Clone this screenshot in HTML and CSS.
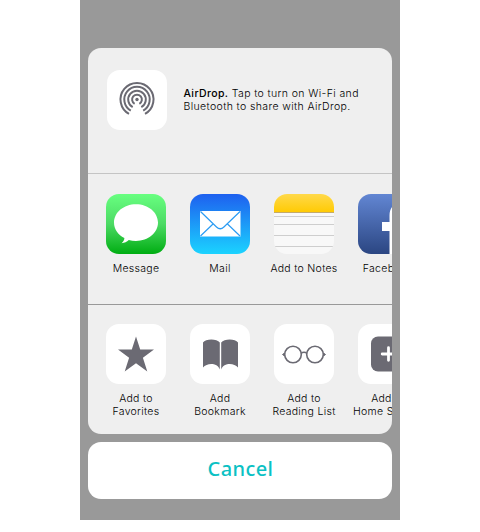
FILE: index.html
```html
<!DOCTYPE html>
<html lang="en">
<head>
<meta charset="utf-8">
<title>Share</title>
<link rel="stylesheet" href="styles.css">
</head>
<body>
<main class="phone">
  <section class="sheet">
    <div class="airdrop">
      <svg class="tile" viewBox="0 0 60 60" fill="none" stroke="#6b6a73" stroke-width="2">
        <circle cx="30" cy="29.500" r="1.700" fill="#6b6a73" stroke="none"/>
        <path d="M27.600 33.800A4.900 4.900 0 1 1 32.400 33.800"/>
        <path d="M25.700 37.200A8.800 8.800 0 1 1 34.300 37.200"/>
        <path d="M23.800 40.600A12.700 12.700 0 1 1 36.200 40.600"/>
        <path d="M22 43.900A16.500 16.500 0 1 1 38 43.900"/>
      </svg>
      <p class="airdrop-text"><b>AirDrop.</b> Tap to turn on Wi-Fi and<br>Bluetooth to share with AirDrop.</p>
    </div>
    <div class="row apps">
      <div class="item">
        <svg class="tile message" viewBox="0 0 60 60"><path fill="#fff" d="M30 10.200c12.300 0 22 8.200 22 18.400S42.300 47 30 47c-2.700 0-5-.3-7.200-.9-2 1.900-4.300 2.900-7.200 3.200 1.800-1.500 2.700-3.200 2.800-5.200C12 41 8 35.200 8 28.600 8 18.400 17.700 10.200 30 10.200z"/></svg>
        <span>Message</span>
      </div>
      <div class="item">
        <svg class="tile mail" viewBox="0 0 60 60"><rect x="10" y="17" width="40.500" height="25.500" fill="#fff"/><g fill="none" stroke="#2c9cf3" stroke-width="1.200"><path d="M10.500 17.500L26.500 33Q30.200 36.500 33.900 33L50 17.500M10.500 42L23 30M50 42L37.500 30"/></g></svg>
        <span>Mail</span>
      </div>
      <div class="item">
        <svg class="tile notes" viewBox="0 0 60 60">
          <defs><linearGradient id="yellow" x2="0" y2="1"><stop stop-color="#ffd94b"/><stop offset="1" stop-color="#ffca02"/></linearGradient></defs>
          <path d="M0 0H60V18.500H0z" fill="url(#yellow)"/><path d="M0 18H60V19H0z" fill="#c3aa6b"/>
          <path d="M0 22.500H60M0 30.500H60M0 41.500H60M0 52.500H60" stroke="#cecece"/>
        </svg>
        <span>Add to Notes</span>
      </div>
      <div class="item">
        <svg class="tile facebook" viewBox="0 0 60 60"><path fill="#fff" d="M31.500 60V37H24v-9h7.500v-6.500c0-8 4.500-12.500 12-12.500H51v9h-5c-3 0-4.500 1.500-4.500 4.500V28H51l-1 9h-8.500v23z"/></svg>
        <span>Facebook</span>
      </div>
    </div>
    <div class="row actions">
      <div class="item">
        <svg class="tile" viewBox="0 0 60 60"><path fill="#6b6a73" d="M30 12.500L34.200 25.600H48L36.900 33.800 41.300 47.500 30 39.200 18.700 47.500 23.100 33.800 12 25.600H25.800z"/></svg>
        <span>Add to<br>Favorites</span>
      </div>
      <div class="item">
        <svg class="tile" viewBox="0 0 60 60"><path fill="#6b6a73" d="M13 18.500C15.500 14.500 27 14.500 29.800 18.500V45.500C27.500 38.500 17 38.500 13 43.500zM48 18.500C45.500 14.500 34 14.500 31.200 18.500V45.500C33.500 38.500 44 38.500 48 43.500z"/></svg>
        <span>Add<br>Bookmark</span>
      </div>
      <div class="item">
        <svg class="tile" viewBox="0 0 60 60" fill="none" stroke="#6b6a73" stroke-width="1.600"><circle cx="19" cy="30.500" r="8.300"/><circle cx="41" cy="30.500" r="8.300"/><path d="M27 29.300Q30 27.200 33 29.300"/><path d="M8.500 30.500L10.500 29V32zM51.500 30.500L49.500 29V32z" fill="#6b6a73" stroke-width="1"/></svg>
        <span>Add to<br>Reading List</span>
      </div>
      <div class="item">
        <svg class="tile" viewBox="0 0 60 60"><rect x="13" y="12.500" width="35" height="35" rx="7" fill="#6b6a73"/><path d="M24.200 30H36.800M30.500 23.700V36.300" stroke="#fff" stroke-width="2.800" stroke-linecap="round"/></svg>
        <span>Add to<br>Home Screen</span>
      </div>
    </div>
  </section>
  <button class="cancel">Cancel</button>
</main>
</body>
</html>
```
FILE: styles.css
```css
* { box-sizing: border-box; }
body { margin: 0; background: #fff; overflow: hidden; }
.phone {
  width: 320px;
  height: 520px;
  margin: 0 auto;
  padding: 48px 8px 0;
  background: #999;
  font: 300 10.500px/13px Inter, sans-serif;
  color: #000;
}
.sheet {
  height: 386px;
  border-radius: 13px;
  background: #efefef;
  overflow: hidden;
}
.tile {
  display: block;
  flex: none;
  width: 60px;
  height: 60px;
  border-radius: 13px;
  background: #fff;
}
.airdrop {
  display: flex;
  gap: 16.500px;
  height: 126px;
  padding: 22px 0 0 19px;
  border-bottom: 1px solid #c4c4c4;
}
.airdrop-text {
  margin: 17px 0 0;
  white-space: nowrap;
  letter-spacing: 0.380px;
}
.airdrop-text b { font-weight: 500; }
.row { display: flex; padding-left: 6px; }
.apps {
  height: 131px;
  padding-top: 20px;
  border-bottom: 1px solid #999;
}
.actions { padding-top: 19px; }
.item {
  display: flex;
  flex: none;
  flex-direction: column;
  align-items: center;
  gap: 8px;
  width: 84px;
  text-align: center;
  white-space: nowrap;
  letter-spacing: 0.300px;
}
.message { background: linear-gradient(#68ff80, #4cda64 50%, #00ad12); }
.mail { background: linear-gradient(#1e60ef, #1bd3ff); }
.notes { background: #f8f8f8; }
.facebook { background: linear-gradient(#6286d3, #2b4682); }
.cancel {
  display: block;
  width: 100%;
  height: 57px;
  margin-top: 8px;
  padding: 0 0 3px 1px;
  border: 0;
  border-radius: 13px;
  background: #fff;
  color: #0bc1c4;
  font: 500 20px/24px "Noto Sans", sans-serif;
  letter-spacing: 0.400px;
}
```
